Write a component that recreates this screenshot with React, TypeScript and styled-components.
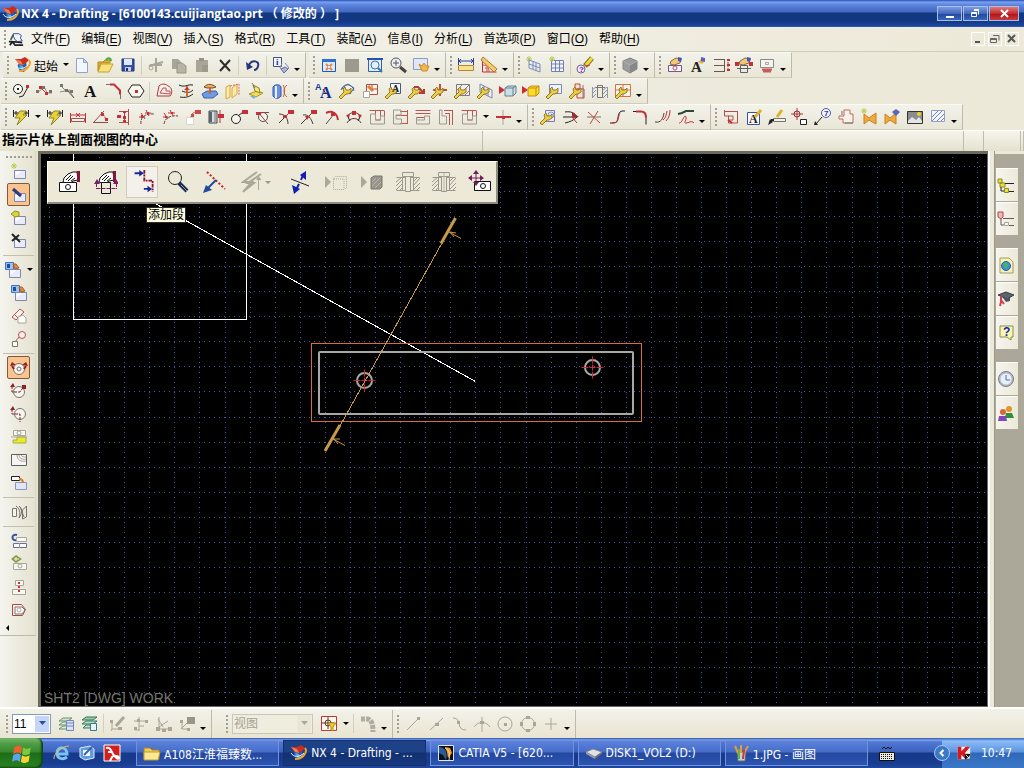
import React from "react";
import styled, { createGlobalStyle, css } from "styled-components";

/* ---------- drawing data ---------- */

type Shape = { d?: string; s?: string; f?: string; w?: number; dash?: string; t?: string; x?: number; y?: number; size?: number; serif?: boolean };

const K = "#222222";
const R = "#c4303a";
const G = "#a9a698";
const M = "#77756c";
const B = "#2540a0";
const L = "#8a97c0";
const DG = "#5f5f5f";

const ln = (d: string, s: string = K, w = 1, dash?: string): Shape => ({ d, s, w, dash });
const fl = (d: string, f: string, s = "none", w = 1): Shape => ({ d, f, s, w });
const tx = (t: string, x: number, y: number, size: number, f: string, serif = false): Shape => ({ t, x, y, size, f, serif });
const ci = (x: number, y: number, r: number) => `M${x - r} ${y}a${r} ${r} 0 1 0 ${2 * r} 0a${r} ${r} 0 1 0 ${-2 * r} 0`;
const bx = (x: number, y: number, w: number, h: number) => `M${x} ${y}h${w}v${h}h${-w}z`;

const globe: Shape[] = [
  fl("M4 8l5 1l3-3l1 6l-3 4c-4 0-7-4-6-8z", "#1f5cc0"),
  fl("M1 3l6 0l4-2l4 3l-3 3l-3 2l-3 0z", "#cc2c1c"),
  fl("M1 3l6 2l2 4l-4-1z", "#f08050"),
  fl("M5 9l4 1l1 5l-3-2z", "#48b4e8"),
  ln("M15 4c3 4-2 11-10 11", "#f0a428", 2),
  ln("M1 9c2 4 8 5 13 0", "#e8f4fc", 1),
];
const wrench: Shape[] = [
  fl("M1 15l5-5l-1-3l2-2l1 3h3l2-2l0 4l-3 2h-2l-5 5z", "#eccf42", "#94792a"),
];
const sheet = (x = 4.5, y = 7.5): Shape[] => [fl(bx(x, y, 11, 8), "#e9ebfa", "#8088ac"), fl(`M${x + 1} ${y + 1}h6l-6 4z`, "#ffffff")];
const hand: Shape[] = [
  fl("M5 5l5-3l5 1l-1 4l-6 2l-4-1z", "#f0c878", "#8c6c40"),
  fl("M12 1l4 1l-1 4l-3-1z", "#4858b8"),
];
const spark: Shape[] = [ln("M2 1l4 4M6 1l-4 4M4 0v6M1 3h6", "#b8cc50")];

const ICONS: Record<string, Shape[]> = {
  logo: globe,
  plane: [
    ln("M2 16l3-4l11 1M5 12l3 4h9M1 12l4 0", "#222222", 2),
    ln("M6 3h6l3 2l-1 3l2 3l-5 1l-3-2l-2-4z", B),
    ln("M6 4l-3 6", "#3a6a50", 2),
  ],
  new: [fl("M3.500 2.500h7l4 4v10h-11z", "#f4f7ff", "#8fa4cc"), fl("M10.500 2.500v4h4z", "#c2d0ee", "#8fa4cc")],
  open: [fl("M2 6h5l2-2h5v3H5l-3 8z", "#dfae2e", "#b08820"), fl("M5 8h12l-4 8H2z", "#f7e27c", "#c8a030"), ln("M10 4c2-3 5-2 5 1", "#46a840", 2)],
  save: [fl(bx(3, 3, 12, 12), "#3650a8", "#1c2e78"), fl(bx(5, 3, 8, 6), "#dfe8fa"), fl(bx(6, 11, 6, 4), "#c8d0e0"), fl(bx(7, 12, 2, 3), "#1c2e78")],
  cut: [ln("M9 2v14M2 10l14-4M3 9h12", G, 2), ln(ci(4, 12, 2), G, 1)],
  copy: [fl("M2 3h6l3 3v7H2z", G), fl("M7 7h5l4 3v7H7z", "#b7b4a6", "#96948a")],
  paste: [fl("M3 4h12v12H3z", G), fl("M6 2h5v3H6z", "#96948a"), fl("M9 9h6v7H9z", "#9c9a8e")],
  delete: [ln("M4 4l10 11M14 4L4 15", "#2c2c2c", 2)],
  undo: [ln("M5 9c3-6 11-4 9 1c0 2-2 4-4 4", "#27367c", 2), fl("M2 6l1 8l6-3z", "#27367c")],
  info: [fl(bx(1.5, 1.5, 8, 9), "#f2f4ff", "#45507c"), tx("i", 4, 9, 9, "#2030a0", true), ln("M10 7l-2 5l5 4l4-4l-4-5", "#8088b8"), fl("M9 13l4-2l3 2l-4 4z", "#aeb6e0", "#5c66a0")],
  fit: [fl(bx(2.5, 3.5, 13, 12), "#dfeafc", "#1c5ab8"), fl(bx(2, 3, 14, 3), "#2c70d4"), ln("M6 8l6 6M12 8l-6 6", "#e08848", 2), fl(bx(8, 10, 2, 2), "#dfeafc")],
  gray: [fl(bx(2, 3, 14, 13), "#9c9a8f")],
  zoombox: [fl(bx(2.5, 3.5, 13, 12), "#e4effc", "#3060b8"), ln("M1 3h16", "#2850b0", 2), ln(ci(9, 9, 4), "#3878a8"), ln("M12 12l4 4", "#3878a8", 2)],
  zoom: [fl(ci(7, 7, 5), "#eef2f8", "#555555"), ln("M4 7h6M7 4v6", "#555555"), ln("M11 11l6 5", "#444444", 3)],
  pan: [fl(bx(1.5, 2.5, 14, 11), "#dfe8fb", "#8c9cc4"), fl("M7 8l3 2l2-3l2 3l3 0l-2 5h-5z", "#f0b850", "#d08a20")],
  ruler: [ln("M1.500 2v7M16.500 2v7", B), ln("M2 5h14M4 3l-2 2l2 2M14 3l2 2l-2 2", "#2840a0"), fl(bx(1.5, 9.5, 15, 5), "#f8e08c", "#b08a30")],
  angle: [ln("M2.500 4v12h14", "#b82c30"), ln("M3 9c4 0 6 3 6 7", "#d0484c"), ln("M5 12h2v4", "#d0484c"), fl("M3 1l14 12l-3 3L1 4z", "#f2cc70", "#b07828")],
  grid1: [...spark, ln("M4 4l11 4v8l-11-4zM4 8l11 4M8 5v8M11 7v8", "#7a8cc0")],
  grid2: [fl(bx(3.5, 4.5, 12, 11), "#f2f5ff", "#7080b0"), ln("M3 8h12M3 12h12M7.500 4v12M11.500 4v12", "#7080b0"), ...spark],
  wand: [ln("M9 10l7-8", "#8c7418", 5), ln("M10 9l6-7", "#f0da40", 3), fl(ci(5, 13, 4), "#f4f0ff", "#70609c"), tx("?", 3, 16, 8, "#702090"), ln("M10 10l4-1", R)],
  cube: [fl("M2 5l7-3l7 3v8l-7 4l-7-4z", "#9b9c9c", "#84868a"), fl("M9 9l7-4v8l-7 4z", "#85878b"), ln("M2 5l7 4l7-4", "#aeb0b0")],
  handbox: [...hand, fl(bx(2.5, 9.5, 13, 6), "#f6f2fa", "#6c5c8c"), ln(ci(9, 12, 2), "#c05060")],
  handA: [tx("A", 2, 16, 15, K, true), fl("M9 6l3-3l4 2l-3 3z", "#e8b040"), fl("M12 1l4 1v4l-4-1z", "#5860c0")],
  dims: [ln("M2 3.500h10M2 9.500h10M2 15.500h10M12.500 3v13", "#6a5850"), ln("M16 3v12", R, 1, "2 1"), fl("M15 3h3v2h-3zM15 8h3v2h-3zM15 13h3v2h-3z", R)],
  handdim: [...hand, ln("M5.500 9.500h7v7h-7zM2 12.500h14", DG), fl("M0 6h4v4H0zM14 6h4v4h-4z", R)],
  stamp: [fl(bx(2.5, 3.5, 13, 8), "#f4f3f2", "#8c8a88"), ln(bx(7.5, 6.5, 3, 2), G), ln("M4 13.500h10M5 15.500h8", "#c85a5a", 2)],
  circline: [fl(ci(6, 7, 4.5), "#fafafa", K), fl(bx(5, 6, 2, 2), K), ln("M7 15l4-1l5-9", K), fl("M14 3h3v3h-3z", R)],
  polyline: [ln("M1 9h4l4-5l3 7h5", "#a09080"), fl("M4 4h3v3H4zM10 10h3v3h-3z", R), ln("M6 6l5 5", R), fl("M1 8h3v3H1zM7 4h3v3H7zM14 8h3v3h-3z", M)],
  trim: [ln("M2 3l5 5l5 2l4 6M2 10l10-2", "#8a8880", 1), fl("M2 2h3v3H2zM7 7h3v3H7zM12 8h3v3h-3z", M), ln("M9 8l7 8", "#7c5050")],
  text: [tx("A", 3, 15, 17, "#111111", true)],
  fillet: [ln("M2 2.500h7l2 0M16.500 8v9", M), ln("M6 2.500h4l6 6v4", R, 2)],
  polygon: [fl("M5 3h8l4 6l-4 6H5L1 9z", "#f8f6ee", K), fl(bx(8, 8, 3, 3), R)],
  profile: [fl("M4 4c3-3 7-2 9 0c4 1 5 7 2 10H2z", "#f7eeea", "#a83a40"), ln("M5 11l3-5h3v3h4v3z", "#c05050")],
  wave: [ln("M1 3c6 3 8-1 14 0M2 15c5 1 9 0 13-3M4 9c5 2 8 2 11-1", K), ln("M9 4v10", "#d0682c", 2), fl("M6 8l3-3l3 3z", R)],
  surface: [fl("M1 12l5-3h9l2 3l-5 4H3z", "#6e9be4", "#3a60ac"), fl("M3 5c4-4 8-3 12 0l-3 1H6z", "#e8b05c", "#7c4c2c"), ln("M9 5v7", "#d06028", 2)],
  plates: [fl("M2 5l4-2v12l-4 2zM8 6l5-4v10l-5 4z", "#fbe9a4", "#d8a848"), ln("M6 4l9-2v11", "#d86c5c", 1, "2 1")],
  paint: [fl("M2 12l8-3l6 2l-7 4z", "#f1dc5c", "#a89430"), fl("M6 3l2 6l5 2l-1-5z", "#f4ec60", "#8c8038"), fl("M3 14h6l-2 3z", "#80b0d8"), ln("M5 1l3 5", M)],
  cylinder: [fl("M3 5c2-3 7-3 8 0v9c-2 3-6 3-8 0z", "#6c90e4", "#2c54b4"), ln("M6 4v12", "#e8f0ff", 2), ln("M13 3c2 3 2 9 0 12M17 3c-4 3-4 9 0 12", "#c85a3a")],
  textAA: [tx("A", 0, 8, 9, "#2038a0"), tx("A", 5, 16, 16, "#1b2c94", true), ln("M8 7l3 5", K)],
  w1: [fl("M4 6l6-4l6 4l-4 6z", "#f4f4f4", DG), ln("M3 8c2-6 8-7 12-2l1 3", "#3c6cb0"), ...wrench],
  w2: [fl(bx(5.5, 2.5, 11, 10), "#fbf5f1", "#b04c48"), ln("M11 3v4h5", "#b04c48"), fl(bx(2.5, 9.5, 6, 6), "#ffffff", G), ln("M7 4l5 5", "#e08030", 3)],
  w3: [fl(bx(6.5, 1.5, 10, 10), "#f7f8fc", "#4c5878"), ...wrench, tx("A", 8, 10, 10, K, true)],
  w4: [...wrench, ln("M7 5h4l5 5M12 11h5V7", "#b03c34", 2)],
  w5: [ln("M3 8h14M10 2v12", "#c05034", 2), ...wrench],
  w6: [fl(bx(3.5, 2.5, 13, 11), "#f1efee", "#807880"), ln("M4 8l6-6M6 13l10-10M12 13l4-4", "#907c84"), ...wrench],
  w7: [fl("M4 2l12 6v8l-12-6z", "#f0f0fa", "#7c84b4"), ln("M8 4v7M12 6v8", "#7c84b4"), ...wrench],
  cubeL: [fl("M0 4l6 4l-6 4z", "#d02c30"), fl("M6 6l3-2h8v7l-3 3H6z", "#c8e0e6", "#64808c"), ln("M6 6h8v8M14 6l3-2", "#64808c")],
  cubeY: [fl("M0 4l6 4l-6 4z", "#d02c30"), fl("M6 6l3-2h8v7l-3 3H6z", "#f8dc28", "#c88c18"), ln("M6 6h8v8M14 6l3-2", "#c88c18")],
  w8: [fl(bx(4.5, 2.5, 12, 9), "#eef3fe", "#7888b8"), ...wrench],
  w9: [fl("M7 2h5v5H7zM9 7h7v9H9z", "#f6e4d8", "#bc4838"), ...wrench, ln("M15 3v13", "#907070")],
  section: [ln("M6.500 3.500h5v12h-5zM4 5.500h10", M), ln("M1 8l4-3M1 12l4-4M1 16l4-4M12 8l4-3M12 12l4-4M12 16l4-4M1.500 5v11M16.500 5v11", "#8c94b4")],
  w10: [fl(bx(1.5, 2.5, 15, 12), "#faf4ec", "#d07448"), ln("M9 2v13M2 8h15", "#d07448"), ...wrench],
  flash: [ln("M1.500 2v7M16.500 2v7M2 5h5M12 5h4M4 3v4M14 3v4", K), fl("M8 3h6l-3 4h4L5 17l3-7H3z", "#e5d338", "#948424")],
  hdim: [ln("M1.500 5v10M16.500 5v10", R), ln("M2 7h14M7 5l4 4M11 5l-4 4", R), fl(bx(2.5, 10.5, 13, 3), "#faf6f0", "#a85050")],
  adim: [ln("M1 14.500h15M2 14l10-11", "#84504c"), ln("M9 4c3 3 5 6 5 9", R, 1, "2 1"), fl("M9 5h3v3H9zM13 10h3v3h-3z", R)],
  vdim: [ln("M13.500 1v16M4 3.500h9M4 14.500h9", "#a85050"), ln("M9.500 4v10", R), fl("M2 7h4v3H2zM8 8h3v3H8zM8 3h3v2H8zM8 12h3v2H8z", R)],
  arc1: [ln("M3 16C2 9 8 5 16 6", "#5c3c38", 1, "3 1"), ln("M3 5l4 6M1 9h6M8 2l3 6M7 5h6", R), fl("M3 7h2v3H3zM9 4h2v2H9z", R)],
  arc2: [ln("M3 16C4 10 9 7 17 8", "#5c3c38", 1, "3 1"), ln("M3 5l4 6M2 9h5M9 2l3 6M7 5h7", R), fl("M4 8h2v2H4zM10 4h2v2h-2z", R)],
  note: [fl(bx(2.5, 9.5, 7, 7), "#ffffff", "#d8d6cc"), ln("M7 9c1-4 3-5 5-5", R), fl("M11 2h6v4h-6zM7 6h3v3H7z", "#c44c48")],
  cyl2: [fl("M2 3h8v12H2z", "#d8dce4", "#3c444c"), fl("M2 4h3v10H2z", "#5c646c"), ln("M8 3v11", M), ln("M13 2v13", R), fl("M11 6h6v4h-6z", R)],
  cdim: [fl(ci(6, 11, 4.5), "#f5f3ea", K), ln("M8 8l5-4", K), fl("M12 2h6v4h-6z", R)],
  cdim2: [fl(ci(10, 9, 4.5), "#f5f3ea", "#5c5048"), ln("M3 4.500h13M5 4l10 12", "#804c48"), fl("M3 4h5v3H3z", R)],
  rdim: [ln("M3 6c6 0 9 4 9 10M3 15l9-9", "#483c38"), fl("M7 7h4v3H7zM12 2h6v4h-6z", R)],
  rdim2: [ln("M4 7c5-1 8 3 10 9M2 16l11-11", "#483c38"), fl("M12 2h6v4h-6z", R), fl("M6 8l5 0l-3 4z", R)],
  rdim3: [ln("M4 5c6-3 11 0 12 7", R, 2), ln("M4 16l8-10", "#5c4444"), fl("M9 4h4v4H9z", R)],
  arch: [ln("M2 15c3-6 11-6 14 0M2 9c3-6 11-6 14 0", "#6c3c38"), fl("M1 7l4-1l-1 4zM17 7l-4-1l1 4zM7 3h4v4H7z", R), ln("M3 9l2 4M15 9l-2 4", K)],
  ord1: [ln("M1.500 2.500h15M7.500 2v10h5v-5M12.500 3v5M16.500 3v5", "#bc5650"), ln("M2.500 6v10h14V8h-4v4h-5v-6z", "#a09890")],
  ord2: [ln("M16.500 2v14M9 3.500h8M5 7.500h12M9 15.500h8", "#bc5650"), ln("M2.500 2v14h8v-5H5v-4h5V2z", "#a09890")],
  ord3: [ln("M1.500 2.500h15M1.500 5.500h15M2 9.500h8", "#bc5650"), ln("M2.500 9v7h13V8h-5v4h-8", "#a09890")],
  ord4: [ln("M15.500 2v15M12.500 6v11M7 2.500h9M8 5.500h5", "#bc5650"), ln("M2.500 2v14h7V8H5V2z", "#a09890")],
  plus: [ln("M9 2v15", G), ln("M2 9h6M10 9h7", R, 2), fl("M8 8h3v3H8z", R)],
  w11: [fl(bx(6.5, 2.5, 9, 11), "#e8eaf8", "#8078b0"), fl(ci(12, 7, 3), "#d8e0f8", L), ...wrench],
  curve1: [ln("M1 9h14c-2-4-6-6-12-5M3 15c5-1 9-3 12-6", K), fl("M10 4l7 5l-7 1z", "#a02c30"), ln("M10 9l5 6", R)],
  cross: [ln("M3 4l12 11M13 3l-8 13", "#c8443c"), ln("M2 9h14", M)],
  scurve: [ln("M2 15h4c6 0 2-11 8-12h3", K), ln("M4 14.500h3c4 0 3-7 5-9", R)],
  corner: [ln("M2 3.500h8c3 0 5 2 5 5v8", K), ln("M5 3.500h5c3 0 5 2 5 6", R, 2)],
  extend: [ln("M1 14c6 1 8-3 9-9", "#5a3a36", 1), ln("M12 13c3-3 4-7 4-11M9 12c3-2 3-5 4-9", R)],
  bridge: [ln("M1 6l4-1l4-2h8", "#2d4a35", 2), ln("M2 15c4 0 5-10 7-6c1 3-3 6 0 6s5-3 8 0", R, 1)],
  feat: [ln("M2 3.500h14M2.500 2v6h4v7h9v-12M6 8h5v4h-5", "#b84e4c"), ln("M6 12l4 3", R, 2)],
  editA: [fl(bx(2.5, 4.5, 12, 12), "#fafaff", "#3c50a0"), tx("A", 4, 15, 12, K, true), ln("M10 9l6-7", "#e0b02c", 3)],
  pen: [fl(bx(5.5, 10.5, 12, 3), "#f4f2ea", M), ln("M3 12h3", K, 2), ln("M9 9l5-7", "#e0b02c", 3), fl("M0 17l2-6l3 3z", K)],
  target: [ln(ci(6, 6, 3), "#7c3034"), ln("M6 0v12M0 6h12", R), fl(bx(9.5, 11.5, 6, 5), "#ffffff", K)],
  balloon: [fl(ci(12, 5, 4.5), "#f4f4ff", "#5458a0"), tx("7", 10, 8, 8, B), ln("M8 9l-6 7", K), fl("M1 13l3 4l-4 0z", K)],
  shape: [fl("M7 2h6v4h3v9H6v-4H2V8h5z", "#f6f1ea", "#bc6c60"), ln("M5 3v4M8 15h8", M)],
  bow: [fl("M4 6l5 4l7-5v11l-7-4l-5 4z", "#f0a840", "#c8801c"), ...spark],
  bow2: [fl("M2 6l5 4l6-5v11l-6-4l-5 4z", "#f0a840", "#c8801c"), fl("M9 4l4-3l4 3l-4 4z", "#5c64b8")],
  photo: [fl(bx(1.5, 3.5, 15, 12), "#8a8c90", "#333333"), fl("M2 13l4-4l4 3l3-3l3 4v2H2z", "#e4e4e4"), fl(ci(13, 6, 2), "#f0d020")],
  hatch: [fl(bx(2.5, 2.5, 13, 11), "#f4f7ff", "#93a0c8"), ln("M3 9l6-6M3 13L13 3M8 13l7-7M12 13l3-3", "#6c80c0")],
  /* side bar */
  sh1: [...sheet(), ...spark],
  sh2: [...sheet(), ln("M3 3l8 7", "#2c3c80", 3)],
  sh3: [...sheet(), fl("M1 5l4-3l4 1v4l-4 1z", "#dcd43c", "#949024")],
  sh4: [...sheet(), ln("M2 2l8 8M9 3l-7 6", "#222222", 2)],
  sh5: [fl(bx(1.5, 1.5, 8, 7), "#9cc0f0", "#3c74c4"), fl(bx(3, 3, 3, 4), "#204ca0"), ...sheet(5.5, 8.5), fl("M9 3h3l3 4l-4 1z", "#e08c38", "#a45c20")],
  proj: [fl("M2 10l8-8l4 3l-8 8z", "#faf0ee", "#b8504c"), ln("M5 8l4 4", "#b8504c"), fl("M8 10l5-2l3 3v5H8z", "#ffffff", G)],
  detail: [fl(ci(12, 5, 3.5), "#faf0ee", "#b8504c"), ln("M9 7l-4 5", "#b8504c"), fl(bx(2.5, 11.5, 5, 5), "#ffffff", M)],
  sec1: [fl(ci(9, 10, 5.5), "#f7f5f0", M), ln(ci(9, 10, 2), M), ln("M2 7l2 3M16 7l-2 3", "#902028", 2), fl("M0 7l2-4l4 3zM18 7l-2-4l-4 3z", "#902028")],
  sec2: [fl(ci(9, 10, 5.5), "#f7f5f0", M), ln("M2 4v6h8l4-6", "#802028", 1, "3 1"), fl("M0 5l3-4l2 4zM12 3h4v4h-4z", "#902028")],
  sec3: [fl(ci(10, 9, 5.5), "#f7f5f0", M), ln("M2 4v5h8v8", "#802028", 1, "3 1"), fl("M0 5l3-4l2 4z", "#902028")],
  half: [fl(bx(3.5, 2.5, 12, 5), "#f7f7f2", G), ln(ci(9, 5, 2), G), fl("M3 12h4v-3h9v6H7H3z", "#e9ed20", "#a8ac50"), ln("M1 9h16", G)],
  brk: [fl(bx(1.5, 3.5, 15, 11), "#f6f5f4", DG), ln("M7 4c0 5 4 7 9 6M9 4c0 3 3 5 7 4M11 4c1 2 3 2 5 2", G)],
  upd: [fl(bx(1.5, 2.5, 8, 4), "#ffffff", K), fl(bx(5.5, 8.5, 11, 7), "#dfe6fc", L), ln("M9 5c3 0 4 1 4 4", "#d87828", 2)],
  spring: [fl(bx(2.5, 5.5, 4, 8), "#f6f5ee", M), ln("M6 3c5 3 4 10 3 12M9 3c4 3 3 8 0 12M16.500 3l-4 4v9l4-2zM10 4l4 10", M)],
  cview: [ln("M7 3c-6-2-6 7 0 5", "#3450a0", 2), fl(bx(6.5, 5.5, 10, 4), "#fafaf6", G), fl(bx(3.5, 11.5, 13, 4), "#fafaf6", "#687098"), ln("M9.500 11v5", L)],
  mview: [fl(bx(3.5, 8.5, 13, 6), "#f7f7f2", G), ln(ci(10, 11, 2), G), fl("M6 0l6 4l-6 4l-5-4z", "#8c9848"), ln("M6 2v4M4 4h5", "#f4f4d8")],
  align: [fl(bx(5.5, 2.5, 8, 5), "#f7f7f2", G), fl(bx(2.5, 11.5, 13, 5), "#f7f7f2", G), ln("M9 4v11", R, 2, "2 2")],
  bound: [fl("M2.500 3.500h9l4 5l-3 6H2.500z", "#faf2ee", "#b04440"), fl("M5 6h7l3 3l-3 4H5z", "#ffffff", M), ln(ci(9, 9, 2), G)],
  /* resource bar */
  nav: [fl("M1 3h4v4H1zM3 7h5v4H3z", "#e8e434", "#8c8820"), ln("M8 7.500h9M4 11v4h3M12 15.500h5", K), fl(bx(7.5, 12.5, 4, 4), "#e8e434", "#8c8820")],
  nav2: [fl("M1 2h5v5l-2 2l-3-2z", "#f0b8b4", "#b04848"), ln("M6 8.500h11M4 9v6h3M12 15.500h5", DG), fl(bx(7.5, 12.5, 4, 3), "#f6f6f6", G)],
  web: [fl("M3 2h9l4 4v11H3z", "#f6f2b0", "#a09c64"), fl(ci(9, 10, 4.5), "#3d8ce0", "#2860a8"), fl("M6 8l3-2l2 3l-2 4z", "#48b850")],
  cap: [fl("M1 5l8-3l8 3l-7 4z", "#5c6470", "#353c44"), fl("M6 8h7v3l-4 1z", "#4c5460"), ln("M4 6l0 6l-1 4M4 10l3 4", "#d03c4c", 2)],
  help: [fl("M3 2h13v11h-2v3l-4-3H3z", "#f8f8b0", "#8c8c50"), tx("?", 6, 12, 12, "#1c24b8")],
  clock: [fl(ci(9, 9, 7.5), "#b8bcc4", "#787c84"), fl(ci(9, 9, 5.5), "#e6f0fa"), ln("M9 5v5h4", "#4870a8")],
  people: [fl(ci(12, 5, 3), "#e09430"), fl("M8 14l1-5h6l2 5z", "#309038"), fl(ci(6, 8, 3), "#d46838"), fl("M1 17l1-5h7l1 5z", "#8048b8")],
  /* bottom tool bar */
  lay1: [fl("M5 3h9l-4 3H1z", "#cfe4cc", "#6a9070"), fl("M5 7h9l-4 3H1zM5 11h9l-4 3H1z", "#dcecd8", "#6a9070"), fl(bx(8.5, 5.5, 7, 10), "#dde4f8", "#7088b8"), ln("M9 8h6M9 11h6", "#7088b8")],
  lay2: [fl("M5 2h11l-4 3H1z", "#9cc8a8", "#34785c"), fl("M5 6h11l-4 3H1zM5 10h11l-4 3H2z", "#bedcc8", "#34785c"), fl(bx(9.5, 8.5, 6, 7), "#e8f4f4", "#34788c")],
  g1: [ln("M3 6v8h7M3 14l-1 2", G), ln("M7 11l8-9", G, 3), fl("M1 5h3v3H1zM9 12h4v3H9z", G)],
  g2: [ln("M7 2v14M2 6h13M3 15h4M7 11h5", G), fl("M5 4h3v3H5zM13 5h3v3h-3zM2 12h3v3H2z", G)],
  g3: [ln("M4 2v12h12M4 12l9-6", G), fl("M1 12h4v4H1zM7 14h4v3H7zM13 12h4v4h-4z", G), ln("M3 4l5 8", G)],
  g4: [ln("M4 5v9h7M3 14l6-6", G), fl("M9 2h8v7H9z", "#989688"), fl("M2 5h3v3H2zM9 13h3v3H9z", G)],
  snap: [fl(bx(1.5, 1.5, 15, 14), "#fdf7ec", "#c03434"), ln("M8 2v12M2 8h12", "#64342c"), ln(ci(8, 8, 3), "#64342c"), fl("M8 8h8l-3 4v4l-2-1v-3z", "#f4cc28", "#b08c18")],
  snap2: [ln("M2 4h6c4 0 6 4 6 13", "#b0ada0", 5, "4 1")],
  l1: [ln("M3 15L14 4", G), fl(bx(13, 2, 3, 3), G)],
  l2: [ln("M3 15L16 3", G), fl(bx(8, 8, 4, 3), G)],
  l3: [ln("M3 3c10 0 2 12 13 12", G), fl(bx(7, 6, 3, 3), G)],
  l4: [ln("M9 2v15M1 12c4-6 12-6 16 0", G), fl(bx(7, 6, 4, 3), G)],
  l5: [ln(ci(9, 9, 7), G), fl(bx(8, 8, 3, 3), G)],
  l6: [ln(ci(9, 9, 6.5), G), fl("M7 1h4v3H7zM7 14h4v3H7zM1 7h3v4H1zM14 7h3v4h-3z", G)],
  l7: [ln("M9 3v12M3 9h12", G)],
  /* task bar */
  ie: [ln("M4 10h10c0-8-10-8-10-1c0 6 6 7 10 4", "#7ac4f4", 3), ln("M1 15c-1-5 8-13 15-13", "#f0c040")],
  desk: [fl("M2 4l10-2l4 3v9l-9 2l-5-3z", "#5c9ce0", "#e0ecfc"), fl(bx(5, 6, 7, 6), "#f6f8ff"), ln("M6 11l8-8", "#3c60a0", 2)],
  acro: [fl(bx(1, 1, 16, 16), "#d4201c", "#ffffff"), ln("M3 4c5-1 5 3 7 6s5 6 6 4s-6-3-7-1l-2 4M5 8h4", "#ffffff", 2)],
  folder: [fl("M1 4h6l2 2h7v9H1z", "#f0cc58", "#a88420"), fl("M1 8h16l-2 8H1z", "#fbe890", "#c09c30")],
  catia: [fl(bx(1.5, 1.5, 15, 15), "#08101c", "#e0e4ec"), fl("M2 3c6 0 9 5 7 13l-3-5l-4-2z", "#2c5c98"), fl("M8 3l5 1l2 5l-4 5l-1-6z", "#f8a030"), ln("M8 4c5 2 5 8 4 12", "#f8d890")],
  disk: [fl("M1 8l7-3l9 3l-7 5z", "#e2e2e6", "#84888c"), fl("M1 8l9 5v2l-9-5z", "#9c9ea4"), fl("M10 13l7-5v2l-7 5z", "#6c6e74")],
  paint2: [fl("M5 8h9l-1 9H6z", "#c8d0d4", "#606870"), ln("M6 9L3 2M9 9V1M12 9l4-7", "#e09c40", 2), ln("M7 15V5", "#58b848", 2), ln("M11 15l1-9", "#c83838", 2)],
  keyb: [fl(bx(1.5, 8.5, 15, 8), "#e8ecd8", "#111111"), ln("M3 10.500h12M3 12.500h12M3 14.500h12", "#111111", 1, "1 1"), ln("M4 5l2-2l2 2l2-2l2 2l2-2", "#111111")],
  kasp: [fl(bx(2, 2, 14, 14), "#f3f3f3"), fl("M2 2h4v5l5-5h5l-6 7l6 7h-5l-5-5v5H2z", "#d8181c"), fl("M10 10h6v6h-6z", "#111111"), ln("M11 11l4 4M15 12v3h-3", "#ffffff")],
  flag: [fl("M3 5c3-2 5-2 7 0l-1 6c-2-2-4-2-7 0z", "#f0602c"), fl("M11 5c3 2 5 1 7 0l-1 6c-3 1-4 2-7 0z", "#7cc83c"), fl("M2 12c3-2 5-2 7 0l-1 6c-2-2-4-2-7 0z", "#5ca4f0"), fl("M10 12c3 2 5 1 7 0l-1 6c-3 1-4 2-7 0z", "#f8d434")],
};

const fist: Shape[] = [
  fl("M5 12l1-4l4-4l5-2h4l1 8l-5 1l-4 3z", "#ffffff", "#111111"),
  ln("M8 10l5-5M10 11l5-5M13 11l4-3", "#111111"),
  fl("M19 1h3v11h-3z", "#801838"),
];
const bolt: Shape[] = [
  fl("M9.500 6.500h5v15h-5z", "#ece9d8", "#9b998c"),
  fl("M6.500 2.500h11v4h-11z", "#ece9d8", "#9b998c"),
];
const sideHatch: Shape[] = [
  ln("M.500 7.500h23M.500 20.500h23M6.500 7v14M17.500 7v14M0 12l5-4M0 16l6-6M0 20l6-6M4 20l3-3M17 12l4-4M17 16l7-8M17 20l7-7M21 20l3-3", "#9b998c"),
];

/* Larger drawings of the floating tool bar, on a 24 unit grid */
const BIG: Record<string, Shape[]> = {
  handview: [...fist, fl(bx(1.5, 12.5, 17, 9), "#ffffff", "#111111"), ln(ci(10, 17, 2.5), "#111111")],
  handsec: [...fist, fl(bx(7.5, 12.5, 9, 11), "#ece9d8", "#111111"), ln("M2.500 18.500h20M2.500 13v6M22.500 13v6", "#781c68", 1, "4 1"), fl("M0 14l3-5l3 5zM19 14l3-5l3 5z", "#781c68")],
  addseg: [ln("M15.500 0v11.500h9v12", "#8c1430", 2, "4 1 2 1"), ln("M5 3.500h6M15 20.500h6", "#14289c", 2), fl("M10 0l5 3.500l-5 3.500zM19 17l5 3.500l-5 3.500z", "#14289c")],
  magnify: [ln(ci(9, 8, 6.5), "#222222"), ln("M13 13l8 8", "#222c50", 4), ln("M15 15l6 6", "#8c98bc")],
  moveseg: [ln("M5 2l18 17", "#c41c20", 2, "2 2"), ln("M14 10l-9 9", "#24489c", 2), fl("M1 23l3-8l6 5z", "#24489c")],
  flash2: [ln("M16 2L2 12h9L2 22M20 4L7 13h6L3 21", "#aaa899", 2), ln("M17.500 20V9", "#aaa899"), fl("M15 10l2.500-4l3 4z", "#aaa899")],
  flip: [ln("M3 9l18 7", "#222222", 1), ln("M15 5l-2 5M11 14l-3 6", "#1020b0", 2), fl("M12 5l6-4v9zM4 15l8 4l-6 5z", "#1020b0")],
  gsel: [fl("M1 6l6 6l-6 6z", "#aaa899"), ln("M9.500 8.500l2-2h11v11l-2 2h-11zM10 9h10v10", "#aaa899", 1, "1 1")],
  gcube: [fl("M1 6l6 6l-6 6z", "#aaa899"), fl("M11 8l3-2h8v11l-2 2H11z", "#98968a", "#78766c"), ln("M12 12l4-4M12 16l8-8M15 18l6-6", "#b8b6a8")],
  bolt1: [...sideHatch, ...bolt],
  bolt2: [...sideHatch, ...bolt, ln("M12 3v18", "#b8b6a8")],
  movebox: [fl(bx(6.5, 11.500, 16, 9), "#ffffff", "#111111"), ln(ci(15, 16, 2.5), "#111111"), ln("M8 2v12M2 8h12", "#70205c"), fl("M5 4l3-4l3 4zM5 12l3 4l3-4zM4 5l-4 3l4 3zM12 5l4 3l-4 3z", "#70205c")],
};

function Drawing({ shapes, box = 18, size = 18 }: { shapes: Shape[]; box?: number; size?: number }) {
  return (
    <svg width={size} height={size} viewBox={`0 0 ${box} ${box}`} aria-hidden="true">
      {shapes.map((p, i) =>
        p.t ? (
          <text key={i} x={p.x} y={p.y} fontSize={p.size} fontWeight="bold" fill={p.f} fontFamily={p.serif ? "Liberation Serif, serif" : "Liberation Sans, sans-serif"}>
            {p.t}
          </text>
        ) : (
          <path key={i} d={p.d} stroke={p.s || "none"} fill={p.f || "none"} strokeWidth={p.w || 1} strokeDasharray={p.dash} />
        )
      )}
    </svg>
  );
}

/* ---------- styled parts ---------- */

const Global = createGlobalStyle`
  * { box-sizing: border-box; }
  body { margin: 0; background: #ece9d8; font-family: "Liberation Sans", "Noto Sans CJK SC", sans-serif; font-size: 12px; color: #000; }
  button, select { font: inherit; color: inherit; }
  svg { display: block; flex: none; }
`;

const Window = styled.div`
  min-height: 100vh;
  display: flex;
  flex-direction: column;
  overflow: hidden;
`;

const TitleBar = styled.header`
  height: 27px;
  display: flex;
  align-items: center;
  padding: 0 5px 0 2px;
  gap: 1px;
  background: linear-gradient(#2450b8 0, #7ba0ee 2px, #5c84dc 5px, #4168c0 12px, #12387f 13px, #123882 21px, #1d46a0 26px, #3564c0 27px);
`;

const Title = styled.h1`
  flex: 1;
  margin: 0;
  color: #fff;
  font: bold 12px/20px "Open Sans", "Noto Sans CJK SC", sans-serif;
  white-space: pre;
`;

const CaptionButtons = styled.div`
  display: flex;
  gap: 1px;
`;

const CaptionButton = styled.button<{ $close?: boolean }>`
  width: ${(p) => (p.$close ? 30 : 25)}px;
  height: 15px;
  padding: 0;
  display: flex;
  align-items: center;
  justify-content: center;
  border: 1px solid #a8bce8;
  background: ${(p) => (p.$close ? "linear-gradient(#e07a78, #c42c30 50%, #a81418 51%, #c83c3c)" : "linear-gradient(#7c9ce4, #4068bc 50%, #20489c 51%, #3866b8)")};
`;

const MenuBar = styled.nav`
  height: 25px;
  display: flex;
  align-items: center;
  padding: 0 5px 0 4px;
  background: linear-gradient(90deg, #f4f3ec, #ece9d8);
  border-bottom: 1px solid #d0cdbd;
`;

const Menus = styled.div`
  display: flex;
  margin-left: 1px;
`;

const MenuItem = styled.button`
  height: 20px;
  padding: 0 5px 3px 6px;
  border: 0;
  background: none;
  white-space: nowrap;
  u { text-underline-offset: 2px; }
`;

const MdiButtons = styled.div`
  display: flex;
  gap: 3px;
  margin-left: auto;
`;

const MdiButton = styled.button`
  width: 14px;
  height: 14px;
  padding: 1px;
  border: 1px solid #fff;
  background: #ece9d8;
`;

const Row = styled.div<{ $start?: number }>`
  height: 26px;
  display: flex;
  padding-left: ${(p) => p.$start ?? 1}px;
  background: linear-gradient(90deg, #eeede5, #ece9d8);
`;

const ToolBar = styled.div<{ $gap?: number }>`
  height: 26px;
  flex: none;
  display: flex;
  align-items: center;
  padding: 0 3px 0 4px;
  margin-right: ${(p) => p.$gap ?? 0}px;
  border-right: 1px solid #bdbaa8;
  border-top: 1px solid #fbfaf4;
  border-bottom: 1px solid #d0cdbc;
  background: linear-gradient(#f3f2ea, #e9e6d6);
`;

const Grip = styled.i<{ $flat?: boolean }>`
  flex: none;
  ${(p) =>
    p.$flat
      ? css`width: 26px; height: 2px; margin: 5px auto 2px; background: repeating-linear-gradient(90deg, #a09e90 0 2px, transparent 2px 4px);`
      : css`width: 2px; height: 18px; margin-right: 2px; background: repeating-linear-gradient(#a09e90 0 2px, transparent 2px 4px);`}
`;

const ToolButton = styled.button<{ $active?: boolean }>`
  flex: none;
  width: 23px;
  height: 23px;
  padding: 0;
  display: flex;
  align-items: center;
  justify-content: center;
  border-radius: 2px;
  border: 1px solid ${(p) => (p.$active ? "#7c5c40" : "transparent")};
  background: ${(p) => (p.$active ? "#fbc38e" : "none")};
`;

const StartMenuButton = styled(ToolButton)`
  width: 59px;
  justify-content: flex-start;
  padding-left: 2px;
  gap: 2px;
  white-space: nowrap;
`;

const Split = styled.i<{ $flat?: boolean }>`
  flex: none;
  ${(p) =>
    p.$flat
      ? css`width: 31px; height: 1px; margin: 3px auto 2px; background: #c2bfae;`
      : css`width: 1px; height: 19px; margin: 0 2px; background: #d2cfbf;`}
`;

const Arrow = styled.button<{ $low?: boolean }>`
  flex: none;
  width: ${(p) => (p.$low ? 10 : 11)}px;
  height: 20px;
  padding: ${(p) => (p.$low ? "13px 0 0" : "8px 0 0")};
  border: 0;
  background: none;
  display: flex;
  justify-content: center;
  &::after {
    content: "";
    width: 0;
    height: 0;
    border: 3px solid transparent;
    border-top-color: #000;
    border-bottom-width: 0;
  }
`;

const Collapse = styled.button`
  align-self: flex-start;
  height: 14px;
  padding: 2px 4px;
  border: 0;
  background: none;
  &::after {
    content: "";
    display: block;
    border: 3px solid transparent;
    border-right-color: #000;
    border-left-width: 0;
  }
`;

const PromptBar = styled.div`
  height: 21px;
  display: flex;
  align-items: stretch;
  background: linear-gradient(#f6f5ec, #e4e1cf);
  border-top: 1px solid #fff;
`;

const PromptCell = styled.div<{ $w?: number }>`
  flex: ${(p) => (p.$w ? `0 0 ${p.$w}px` : "1")};
  padding-left: 2px;
  border-right: 1px solid #bfbcab;
  font-weight: bold;
  font-size: 13px;
  line-height: 18px;
  white-space: nowrap;
`;

const Main = styled.main`
  flex: 1;
  display: flex;
  min-height: 556px;
`;

const SideBar = styled.aside`
  flex: none;
  width: 38px;
  background: linear-gradient(90deg, #f5f4ee, #e4e1cf);
`;

const SideTools = styled.div`
  width: 36px;
  display: flex;
  flex-direction: column;
  align-items: center;
  padding-left: 2px;
  border-bottom: 1px solid #bdbaa8;
  border-right: 1px solid #dad7c7;
`;

const SideLine = styled.div`
  display: flex;
  align-items: center;
`;

const Sheet = styled.section`
  flex: 1;
  position: relative;
  min-width: 0;
  overflow: hidden;
  background: #000;
  border: solid #6c6a60;
  border-width: 3px 1px 1px 3px;
`;

const Plot = styled.svg`
  position: absolute;
  inset: 0;
  width: 100%;
  height: 100%;
`;

const SheetLabel = styled.p`
  position: absolute;
  left: 3px;
  bottom: 0;
  margin: 0;
  color: #77776f;
  font-size: 14px;
  line-height: 16px;
`;

const FloatBar = styled.div`
  position: absolute;
  left: 6px;
  top: 7px;
  height: 43px;
  display: flex;
  align-items: center;
  gap: 4px;
  padding-left: 6px;
  background: #ece9d8;
  border: 1px solid #fff;
  border-right: 2px solid #8e8c80;
  border-bottom: 2px solid #8e8c80;
`;

const FloatButton = styled.button<{ $active?: boolean }>`
  position: relative;
  width: 32px;
  height: 32px;
  padding: 0;
  display: flex;
  align-items: center;
  justify-content: center;
  border: 1px solid ${(p) => (p.$active ? "#cfcbc0" : "transparent")};
  background: ${(p) => (p.$active ? "#f4f1ea" : "none")};
`;

const FloatSplit = styled(FloatButton)`
  width: 40px;
  margin-left: 6px;
  justify-content: flex-start;
  &::after {
    content: "";
    border: 3px solid transparent;
    border-top-color: #99978a;
    border-bottom-width: 0;
  }
`;

const Tip = styled.span`
  position: absolute;
  left: 19px;
  top: 40px;
  z-index: 1;
  padding: 0 1px;
  background: #ffffe1;
  border: 1px solid #2c2c24;
  line-height: 14px;
  white-space: nowrap;
`;

const Divider = styled.div`
  flex: none;
  width: 7px;
  background: #ece9d8;
  border-left: 2px solid #fff;
  border-right: 1px solid #9c998a;
`;

const Resources = styled.aside`
  flex: none;
  width: 29px;
  padding: 14px 6px 0 1px;
  background: #aca899;
  border-top: 3px solid #ece9d8;
`;

const ResourceGroup = styled.div`
  display: grid;
  gap: 1px;
  margin-bottom: 13px;
`;

const ResourceTab = styled.button`
  width: 22px;
  height: 33px;
  padding: 0 0 0 1px;
  border: 0;
  border-top: 1px solid #fff;
  background: linear-gradient(90deg, #f6f5ee, #ece9d8);
`;

const BottomBar = styled.div`
  height: 31px;
  display: flex;
  align-items: center;
  padding-left: 2px;
  background: linear-gradient(#f3f2ea, #e8e5d2);
  border-top: 2px solid #fff;
`;

const BottomTools = styled.div<{ $gap?: number }>`
  flex: none;
  height: 28px;
  display: flex;
  align-items: center;
  padding: 0 3px 0 4px;
  margin-right: ${(p) => p.$gap ?? 0}px;
  border-right: 1px solid #bdbaa8;
`;

const Combo = styled.label<{ $w: number; $off?: boolean }>`
  flex: none;
  width: ${(p) => p.$w}px;
  height: 20px;
  margin: 0 4px 0 2px;
  display: flex;
  border: 1px solid ${(p) => (p.$off ? "#c9c7ba" : "#7f9db9")};
  background: ${(p) => (p.$off ? "#efedde" : "#fff")};
  color: ${(p) => (p.$off ? "#a5a294" : "#000")};
  select {
    flex: 1;
    min-width: 0;
    padding: 0 0 0 1px;
    border: 0;
    appearance: none;
    background: none;
    color: inherit;
    opacity: 1;
    line-height: 16px;
  }
`;

const ComboMark = styled.span<{ $off?: boolean }>`
  width: 14px;
  margin: 1px;
  display: grid;
  place-items: center;
  background: ${(p) => (p.$off ? "#e9e6d8" : "#c5d5fa")};
`;

const TaskBar = styled.footer`
  height: 30px;
  display: flex;
  align-items: stretch;
  color: #fff;
  font-family: "DejaVu Sans Condensed", "Noto Sans CJK SC", sans-serif;
  background: linear-gradient(#2a50a8 0, #80a4ec 2px, #5078d4 4px, #3c62bc 14px, #17398a 15px, #183c90 25px, #20489c 30px);
`;

const StartButton = styled.button`
  flex: none;
  width: 43px;
  padding: 0;
  display: flex;
  align-items: center;
  justify-content: center;
  border: 0;
  border-radius: 0 6px 6px 0;
  background: linear-gradient(#78b86c 0, #4c9c44 6px, #36882f 14px, #1c6c18 15px, #2c8420 30px);
  box-shadow: inset -2px -1px 2px #0e4410;
`;

const Quick = styled.div`
  flex: none;
  width: 90px;
  padding: 0 12px 0 10px;
  display: flex;
  align-items: center;
  justify-content: space-between;
`;

const QuickButton = styled.button`
  padding: 0;
  border: 0;
  background: none;
`;

const Tasks = styled.div`
  flex: 0 1 735px;
  min-width: 0;
  display: flex;
  gap: 4px;
  padding: 2px 0 2px 3px;
`;

const Task = styled.button<{ $active?: boolean }>`
  flex: 1;
  min-width: 0;
  padding: 0 6px;
  display: flex;
  align-items: center;
  gap: 3px;
  white-space: nowrap;
  border: 1px solid ${(p) => (p.$active ? "#16306c" : "#7092dc")};
  background: ${(p) => (p.$active ? "linear-gradient(#1e4288 0 11px, #122f70 12px, #183a80)" : "linear-gradient(#5c82dc 0, #456cc8 11px, #2447a0 12px, #2d55b0)")};
`;

const InputMethod = styled.button`
  margin: 0 auto 0 10px;
  padding: 0;
  border: 0;
  background: none;
`;

const Tray = styled.div`
  flex: none;
  width: 82px;
  display: flex;
  align-items: center;
  gap: 6px;
  background: linear-gradient(#3864b8 0, #8cbcf8 3px, #5c94e0 14px, #3068b8 15px, #3c78c8 30px);
`;

const Clock = styled.time`
  margin-left: 3px;
`;

const Chevron = styled.button`
  flex: none;
  width: 16px;
  height: 16px;
  padding: 0;
  margin-left: -8px;
  border-radius: 50%;
  border: 1px solid #a4c8f4;
  background: #3c78c8;
`;

/* ---------- composition ---------- */

/* "|" is a separator, "v" a drop-down arrow beside the tool before it */
function Tools({ names, off }: { names: string; off?: boolean }) {
  return (
    <>
      {names.split(" ").map((n, i) =>
        n === "|" ? <Split key={i} /> : n === "v" ? <Arrow key={i} aria-label="more" /> : (
          <ToolButton key={i} aria-label={n} disabled={off}>
            <Drawing shapes={ICONS[n]} />
          </ToolButton>
        )
      )}
    </>
  );
}

function Bar({ names, gap, children }: { names: string; gap?: number; children?: React.ReactNode }) {
  return (
    <ToolBar role="toolbar" $gap={gap}>
      <Grip />
      {children}
      <Tools names={names} />
      <Arrow $low aria-label="options" />
    </ToolBar>
  );
}

const MENUS: [string, string][] = [
  ["文件", "F"], ["编辑", "E"], ["视图", "V"], ["插入", "S"], ["格式", "R"], ["工具", "T"],
  ["装配", "A"], ["信息", "I"], ["分析", "L"], ["首选项", "P"], ["窗口", "O"], ["帮助", "H"],
];

const SIDE = ["sh1", "sh2*", "sh3", "sh4", "|", "sh5v", "sh5", "proj", "detail", "|", "sec1*", "sec2", "sec3", "half", "brk", "upd", "|", "spring", "|", "cview", "mview", "align", "bound"];

const RESOURCES = [["nav", "nav2"], ["web", "cap", "help"], ["clock", "people"]];

const TASKS: { icon: string; label: string; active?: boolean }[] = [
  { icon: "folder", label: "A108江淮福臻数..." },
  { icon: "logo", label: "NX 4 - Drafting - ...", active: true },
  { icon: "catia", label: "CATIA V5 - [620..." },
  { icon: "disk", label: "DISK1_VOL2 (D:)" },
  { icon: "paint2", label: "1.JPG - 画图" },
];

const GRID = Array.from({ length: 80 }, (_, k) => k);

function DrawingSheet() {
  return (
    <Plot aria-label="drawing sheet" fill="none">
      <g stroke="#3f5a9c" strokeDasharray="1 4">
        {GRID.map((k) => (
          <path key={k} d={`M${Math.round(8 + k * 25.08) + 0.5} 3v1600M3 ${Math.round(12 + k * 25.05) + 0.5}h2400`} />
        ))}
      </g>
      <g transform="translate(-41 -154)">
        <path d="M73.500 150V319.500H246.500V150" stroke="#fff" shapeRendering="crispEdges" />
        <path d="M156 204L475.500 381.500" stroke="#fff" shapeRendering="crispEdges" />
        <rect x="311.500" y="343.500" width="330" height="78" stroke="#dc6c3c" shapeRendering="crispEdges" />
        <rect x="319" y="352" width="314" height="62" rx="1" stroke="#a8a8a4" strokeWidth="2" />
        {[[364.5, 380.5], [592.5, 367.5]].map(([x, y]) => (
          <g key={x}>
            <path d={ci(x, y, 7.5)} stroke="#a8a8a4" strokeWidth="2" />
            <path d={`M${x - 11} ${y}h7m1 0h6m1 0h7M${x} ${y - 11}v7m0 1v6m0 1v7`} stroke="#d82438" />
          </g>
        ))}
        <g stroke="#c89a48">
          <path d="M452 225L331 442" shapeRendering="crispEdges" />
          <path d="M455.500 218L441 243.500M340 425L325 451" strokeWidth="3" />
          <path d="M461 238.500L449 232M450 232l6 1M450 232l4 5M345 445.500L333 439M334 439l6 0M334 439l4 5" />
        </g>
      </g>
    </Plot>
  );
}

function FloatingTools() {
  const tool = (n: string, label: string) => (
    <FloatButton aria-label={label}>
      <Drawing shapes={BIG[n]} box={24} size={24} />
    </FloatButton>
  );
  return (
    <FloatBar role="toolbar">
      {tool("handview", "view")}
      {tool("handsec", "section line")}
      <FloatButton $active aria-label="添加段">
        <Drawing shapes={BIG.addseg} box={26} size={24} />
        <Tip role="tooltip">添加段</Tip>
      </FloatButton>
      {tool("magnify", "inspect")}
      {tool("moveseg", "move segment")}
      <FloatSplit aria-label="infer">
        <Drawing shapes={BIG.flash2} box={24} size={24} />
      </FloatSplit>
      {tool("flip", "reverse")}
      {tool("gsel", "select body")}
      {tool("gcube", "solid")}
      {tool("bolt1", "hatch bolt")}
      {tool("bolt2", "hatch part")}
      {tool("movebox", "place view")}
    </FloatBar>
  );
}

function Picker({ width, value, off }: { width: number; value: string; off?: boolean }) {
  return (
    <Combo $w={width} $off={off}>
      <select aria-label={off ? "scope" : "layer"} disabled={off}>
        <option>{value}</option>
      </select>
      <ComboMark $off={off}>
        <svg width="7" height="5">
          <path d="M0 0l3.500 4l3.500-4z" fill={off ? "#aaa899" : "#30508c"} />
        </svg>
      </ComboMark>
    </Combo>
  );
}

export default function App() {
  return (
    <Window>
      <Global />
      <TitleBar>
        <Drawing shapes={globe} />
        <Title>NX 4 - Drafting - [6100143.cuijiangtao.prt （ 修改的 ） ]</Title>
        <CaptionButtons>
          <CaptionButton aria-label="minimize"><svg width="10" height="9"><path d="M1 8h8" stroke="#fff" strokeWidth="2" /></svg></CaptionButton>
          <CaptionButton aria-label="restore"><svg width="9" height="9" fill="none" stroke="#fff"><path d="M.500 3.500h5v4h-5zM.500 4.500h5M3 1.500h4.500v4M3 .500h5" /></svg></CaptionButton>
          <CaptionButton $close aria-label="close"><svg width="9" height="9"><path d="M1 1l7 7M8 1l-7 7" stroke="#fff" strokeWidth="2" /></svg></CaptionButton>
        </CaptionButtons>
      </TitleBar>

      <MenuBar>
        <Grip />
        <Drawing shapes={ICONS.plane} size={16} />
        <Menus>
          {MENUS.map(([label, key]) => (
            <MenuItem key={key}>{label}(<u>{key}</u>)</MenuItem>
          ))}
        </Menus>
        <MdiButtons>
          <MdiButton aria-label="minimize sheet"><svg width="10" height="10"><path d="M2 8h5" stroke="#555" strokeWidth="2" /></svg></MdiButton>
          <MdiButton aria-label="restore sheet"><svg width="10" height="10" fill="none" stroke="#666"><path d="M.500 4.500h6v4h-6zM3 1.500h6v5M.500 5.500h6" /></svg></MdiButton>
          <MdiButton aria-label="close sheet"><svg width="10" height="10"><path d="M1 1l7 7M8 1l-7 7" stroke="#555" strokeWidth="2" /></svg></MdiButton>
        </MdiButtons>
      </MenuBar>

      <Row $start={3}>
        <Bar gap={3} names="new open save | cut copy paste delete | undo | info">
          <StartMenuButton><Drawing shapes={globe} />起始<Arrow as="i" /></StartMenuButton>
        </Bar>
        <Bar names="fit gray zoombox zoom pan" />
        <Bar names="ruler angle" />
        <Bar names="grid1 grid2 | wand" />
        <Bar names="cube" />
        <Bar names="handbox handA dims handdim stamp" />
      </Row>
      <Row>
        <Bar names="circline polyline trim text fillet polygon | profile wave surface plates paint cylinder" />
        <Bar names="textAA w1 w2 w3 w4 w5 w6 w7 cubeL cubeY w8 w9 section w10" />
      </Row>
      <Row>
        <Bar names="flash v flash hdim adim vdim arc1 arc2 note cyl2 cdim cdim2 rdim rdim2 rdim3 arch ord1 ord2 ord3 ord4 ord1 v plus" />
        <Bar names="w11 curve1 cross scurve corner extend bridge" />
        <Bar names="feat editA pen target balloon shape bow bow2 photo hatch" />
      </Row>

      <PromptBar>
        <PromptCell $w={483}>指示片体上剖面视图的中心</PromptCell>
        <PromptCell />
        <PromptCell $w={20} />
        <PromptCell $w={37} />
        <PromptCell $w={1} />
      </PromptBar>

      <Main>
        <SideBar>
          <SideTools role="toolbar">
            <Grip $flat />
            {SIDE.map((n, i) => {
              if (n === "|") return <Split key={i} $flat />;
              const name = n.replace(/[*v]$/, "");
              return (
                <SideLine key={i}>
                  <ToolButton $active={n.endsWith("*")} aria-label={name}><Drawing shapes={ICONS[name]} /></ToolButton>
                  {n.endsWith("v") && <Arrow aria-label="more sheets" />}
                </SideLine>
              );
            })}
            <Collapse aria-label="collapse" />
          </SideTools>
        </SideBar>
        <Sheet>
          <DrawingSheet />
          <SheetLabel>SHT2 [DWG] WORK</SheetLabel>
          <FloatingTools />
        </Sheet>
        <Divider />
        <Resources>
          {RESOURCES.map((group) => (
            <ResourceGroup key={group[0]}>
              {group.map((n) => (
                <ResourceTab key={n} aria-label={n}><Drawing shapes={ICONS[n]} /></ResourceTab>
              ))}
            </ResourceGroup>
          ))}
        </Resources>
      </Main>

      <BottomBar>
        <BottomTools $gap={10}>
          <Grip />
          <Picker width={39} value="11" />
          <Tools names="lay1 lay2 |" />
          <Tools names="g1 g2 g3 g4" off />
          <Arrow $low aria-label="options" />
        </BottomTools>
        <BottomTools>
          <Grip />
          <Picker width={81} value="视图" off />
          <Tools names="snap v | snap2" />
          <Arrow $low aria-label="options" />
        </BottomTools>
        <BottomTools>
          <Grip />
          <Tools names="l1 l2 l3 l4 l5 l6 l7" off />
          <Arrow $low aria-label="options" />
        </BottomTools>
      </BottomBar>

      <TaskBar>
        <StartButton aria-label="start"><Drawing shapes={ICONS.flag} box={20} size={22} /></StartButton>
        <Quick>
          {["ie", "desk", "acro"].map((n) => (
            <QuickButton key={n} aria-label={n}><Drawing shapes={ICONS[n]} /></QuickButton>
          ))}
        </Quick>
        <Tasks>
          {TASKS.map((t) => (
            <Task key={t.label} $active={t.active}><Drawing shapes={ICONS[t.icon]} />{t.label}</Task>
          ))}
        </Tasks>
        <InputMethod aria-label="keyboard"><Drawing shapes={ICONS.keyb} /></InputMethod>
        <Tray>
          <Chevron aria-label="show hidden icons"><svg width="14" height="14"><path d="M8.500 4l-3 3l3 3" stroke="#fff" strokeWidth="2" fill="none" /></svg></Chevron>
          <Drawing shapes={ICONS.kasp} size={16} />
          <Clock>10:47</Clock>
        </Tray>
      </TaskBar>
    </Window>
  );
}
